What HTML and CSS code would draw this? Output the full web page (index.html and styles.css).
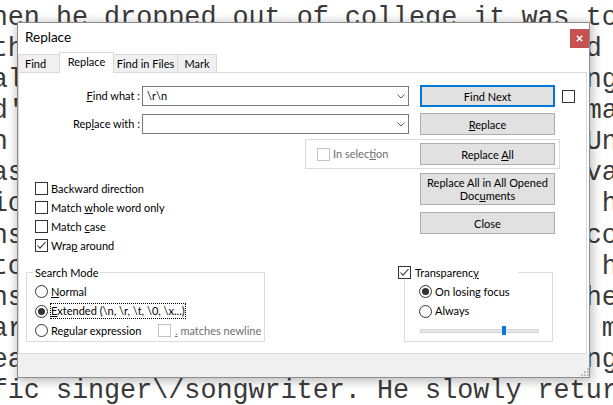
FILE: index.html
```html
<!DOCTYPE html>
<html>
<head>
<meta charset="utf-8">
<title>Replace</title>
<link rel="stylesheet" href="styles.css">
</head>
<body>
<div class="editor">
<div class="ln">on, and the band released a pop music and</div>
<div class="ln">hen he dropped out of college it was to </div>
<div class="ln">the wrote songs about the world and td </div>
<div class="ln">ale wrote songs about the world and tng</div>
<div class="ln">d'e wrote songs about the world and tma</div>
<div class="ln">n e wrote songs about the world and tUn</div>
<div class="ln">ase wrote songs about the world and tva</div>
<div class="ln">ice wrote songs about the world and t h</div>
<div class="ln">nse wrote songs about the world and tco</div>
<div class="ln">tce wrote songs about the world and t h</div>
<div class="ln">nse wrote songs about the world and the</div>
<div class="ln">are wrote songs about the world and t m</div>
<div class="ln">eae wrote songs about the world and tng</div>
<div class="ln">fic singer\/songwriter. He slowly return</div>
</div>

<div class="dialog">
  <div class="titlebar">
    <span class="title">Replace</span>
    <span class="close"><svg width="7" height="7" viewBox="0 0 7 7"><path d="M0.8 0.8L6.2 6.2M6.2 0.8L0.8 6.2" stroke="#fff" stroke-width="1.6" fill="none"/></svg></span>
  </div>
  <div class="tabs">
    <div class="tab t-find">Find</div>
    <div class="tab t-replace">Replace</div>
    <div class="tab t-files">Find in Files</div>
    <div class="tab t-mark">Mark</div>
  </div>
  <div class="panel">
    <div class="row">
      <span class="lbl"><u>F</u>ind what :</span>
      <div class="combo"><span class="combo-text">\r\n</span><svg class="chev" width="8" height="5" viewBox="0 0 8 5"><polyline points="0.5,0.5 4,4 7.5,0.5" fill="none" stroke="#606060" stroke-width="1"/></svg></div>
      <div class="btn default">Find Next</div>
      <span class="cb small"></span>
    </div>
    <div class="row row2">
      <span class="lbl">Rep<u>l</u>ace with :</span>
      <div class="combo"><span class="combo-text"></span><svg class="chev" width="8" height="5" viewBox="0 0 8 5"><polyline points="0.5,0.5 4,4 7.5,0.5" fill="none" stroke="#606060" stroke-width="1"/></svg></div>
      <div class="btn"><span><u>R</u>eplace</span></div>
    </div>
    <div class="selbox">
      <div class="check disabled"><span class="cb"></span><span>In selec<u>t</u>ion</span></div>
      <div class="btn"><span>Replace <u>A</u>ll</span></div>
    </div>
    <div class="lower">
      <div class="opts">
        <div class="check"><span class="cb"></span><span>Backward direction</span></div>
        <div class="check"><span class="cb"></span><span>Match <u>w</u>hole word only</span></div>
        <div class="check"><span class="cb"></span><span>Match <u>c</u>ase</span></div>
        <div class="check"><span class="cb on"><svg width="11" height="11" viewBox="0 0 11 11"><polyline points="1.5,5.5 4,8.2 9.5,2" fill="none" stroke="#333" stroke-width="1.1"/></svg></span><span>Wra<u>p</u> around</span></div>
      </div>
      <div class="btncol">
        <div class="btn tall"><span>Replace All in All Opened<br>Doc<u>u</u>ments</span></div>
        <div class="btn">Close</div>
      </div>
    </div>
    <div class="groups">
      <fieldset class="grp mode">
        <legend>Search Mode</legend>
        <div class="radio"><span class="rb"></span><span><u>N</u>ormal</span></div>
        <div class="radio"><span class="rb on"></span><span class="focus"><u>E</u>xtended (\n, \r, \t, \0, \x...)</span></div>
        <div class="radio regex">
          <div class="radio-inner"><span class="rb"></span><span>Re<u>g</u>ular expression</span></div>
          <div class="check disabled nl"><span class="cb"></span><span><u>.</u> matches newline</span></div>
        </div>
      </fieldset>
      <fieldset class="grp transp">
        <legend><span class="cb on"><svg width="11" height="11" viewBox="0 0 11 11"><polyline points="1.5,5.5 4,8.2 9.5,2" fill="none" stroke="#333" stroke-width="1.1"/></svg></span><span>Transparenc<u>y</u></span></legend>
        <div class="radio"><span class="rb on"></span><span>On losing focus</span></div>
        <div class="radio"><span class="rb"></span><span>Always</span></div>
        <div class="slider-row"><div class="track"><span class="thumb"></span></div></div>
      </fieldset>
    </div>
  </div>
  <div class="footer">
    <svg class="grip" width="8" height="8" viewBox="0 0 8 8"><g fill="#bdbdbd"><rect x="6" y="0" width="2" height="2"/><rect x="3" y="3" width="2" height="2"/><rect x="6" y="3" width="2" height="2"/><rect x="0" y="6" width="2" height="2"/><rect x="3" y="6" width="2" height="2"/><rect x="6" y="6" width="2" height="2"/></g></svg>
  </div>
</div>
</body>
</html>
```

FILE: styles.css
```css
* { box-sizing: border-box; }
html, body { margin: 0; padding: 0; }
body {
  width: 613px;
  height: 405px;
  overflow: hidden;
  position: relative;
  background: #fff;
  font-family: Lato, "Open Sans", sans-serif;
}

/* background editor */
.editor {
  margin: -28.2px 0 0 -8.3px;
  font-family: "Liberation Mono", "Courier New", monospace;
  font-size: 26.75px;
  line-height: 31.1px;
  color: #3a3a3a;
  width: 640px;
}
.ln {
  height: 31.1px;
  white-space: pre;
}

/* dialog */
.dialog {
  position: absolute;
  left: 17px;
  top: 22px;
  width: 573px;
  height: 356px;
  border: 1px solid #8c8c8c;
  background: #fff;
  box-shadow: 1px 2px 10px 1px rgba(0, 0, 0, 0.28);
  display: flex;
  flex-direction: column;
  font-size: 11px;
  color: #000;
}
.titlebar {
  flex: none;
  height: 29px;
  display: flex;
  justify-content: space-between;
  align-items: flex-start;
}
.title {
  font-size: 13.5px;
  line-height: 29px;
  padding-left: 7px;
}
.close {
  width: 19px;
  height: 19px;
  margin-top: 6px;
  background: #c75050;
  display: flex;
  align-items: center;
  justify-content: center;
}

.tabs {
  flex: none;
  height: 20px;
  display: flex;
  align-items: flex-end;
  position: relative;
  z-index: 1;
}
.tab {
  height: 18px;
  border-top: 1px solid #d9d9d9;
  background: #f0f0f0;
  text-align: center;
  line-height: 17px;
  white-space: nowrap;
}
.t-find { width: 41px; border-left: 1px solid #d9d9d9; text-align: left; padding-left: 6px; }
.t-replace {
  width: 55px;
  height: 21px;
  margin-bottom: -1px;
  background: #fff;
  border: 1px solid #d9d9d9;
  border-bottom: none;
  line-height: 18px;
}
.t-files { width: 64px; border-right: 1px solid #d9d9d9; }
.t-mark { width: 39px; border-right: 1px solid #d9d9d9; }

.panel {
  flex: none;
  height: 282px;
  margin-right: 2px;
  border: 1px solid #d9d9d9;
  padding-top: 12px;
  display: flex;
  flex-direction: column;
}
.footer {
  flex: 1;
  background: #f0f0f0;
  position: relative;
}
.grip { position: absolute; right: 0; bottom: 1px; }

.row {
  flex: none;
  display: flex;
  align-items: center;
  height: 22px;
}
.row2 { margin-top: 6px; }
.lbl {
  width: 121px;
  text-align: right;
  line-height: 14px;
  white-space: nowrap;
}
.combo {
  width: 267px;
  height: 20px;
  margin-left: 2px;
  border: 1px solid #7a7a7a;
  display: flex;
  align-items: center;
  justify-content: space-between;
  padding: 0 3px 0 4px;
  background: #fff;
}
.combo-text { line-height: 14px; }
.chev { flex: none; }

.btn {
  flex: none;
  width: 135px;
  height: 22px;
  background: #e1e1e1;
  border: 1px solid #adadad;
  display: flex;
  align-items: center;
  justify-content: center;
  text-align: center;
  line-height: 13px;
  white-space: nowrap;
}
.row .btn { margin-left: 11px; }
.btn.default { border: 2px solid #0078d7; }
.btn.tall { height: 32px; }

.cb {
  flex: none;
  width: 13px;
  height: 13px;
  border: 1px solid #333;
  background: #fff;
  display: flex;
  align-items: center;
  justify-content: center;
}
.cb.small { margin-left: 7px; }
.rb {
  flex: none;
  width: 13px;
  height: 13px;
  border: 1px solid #333;
  border-radius: 50%;
  background: #fff;
  display: flex;
  align-items: center;
  justify-content: center;
}
.rb.on::after {
  content: "";
  width: 7px;
  height: 7px;
  border-radius: 50%;
  background: #333;
}

.check {
  display: flex;
  align-items: center;
  gap: 3px;
  height: 19px;
  line-height: 14px;
  white-space: nowrap;
}
.check.disabled { color: #6d6d6d; }
.check.disabled .cb { border-color: #c4c4c4; }

.selbox {
  flex: none;
  margin: 4px 0 0 286px;
  width: 255px;
  height: 30px;
  border: 1px solid #dcdcdc;
  display: flex;
  align-items: center;
  justify-content: space-between;
  padding: 0 4px 0 11px;
}

.lower {
  flex: none;
  margin-top: 4px;
  display: grid;
  grid-template-columns: 401px 135px;
  align-items: start;
}
.opts { padding: 6px 0 0 16px; }
.btncol {
  display: flex;
  flex-direction: column;
  gap: 7px;
}

.groups {
  flex: none;
  margin-top: 10px;
  display: flex;
  align-items: flex-start;
}
.grp {
  margin: 0;
  height: 77px;
  border: 1px solid #dcdcdc;
  padding: 2px 6px 0;
  min-width: 0;
}
.grp legend {
  padding: 0 2px;
  line-height: 15px;
  font-size: 11px;
  white-space: nowrap;
}
.mode { margin-left: 7px; width: 239px; }
.transp { margin-left: 139px; width: 149px; padding-left: 14px; }
.transp legend {
  padding: 0;
  margin-left: -21px;
  width: 120px;
  display: flex;
  align-items: center;
  gap: 4px;
  background: #fff;
}

.radio {
  display: flex;
  align-items: center;
  gap: 3px;
  height: 19.5px;
  line-height: 14px;
  white-space: nowrap;
}
.mode .radio { margin-left: 2px; }
.focus {
  border: 1px dotted #000;
  margin-left: -1px;
  line-height: 14px;
}
.regex {
  display: grid;
  grid-template-columns: 123px 110px;
  align-items: center;
  gap: 0;
}
.radio-inner { display: flex; align-items: center; gap: 3px; }
.nl { gap: 4px; }

.slider-row {
  height: 19.5px;
  display: flex;
  align-items: center;
}
.track {
  position: relative;
  margin-left: 1px;
  width: 119px;
  height: 4px;
  background: #e7e7e7;
  border: 1px solid #d6d6d6;
}
.thumb {
  position: absolute;
  left: 81px;
  top: -4px;
  width: 4px;
  height: 9px;
  background: #0078d7;
}
```
